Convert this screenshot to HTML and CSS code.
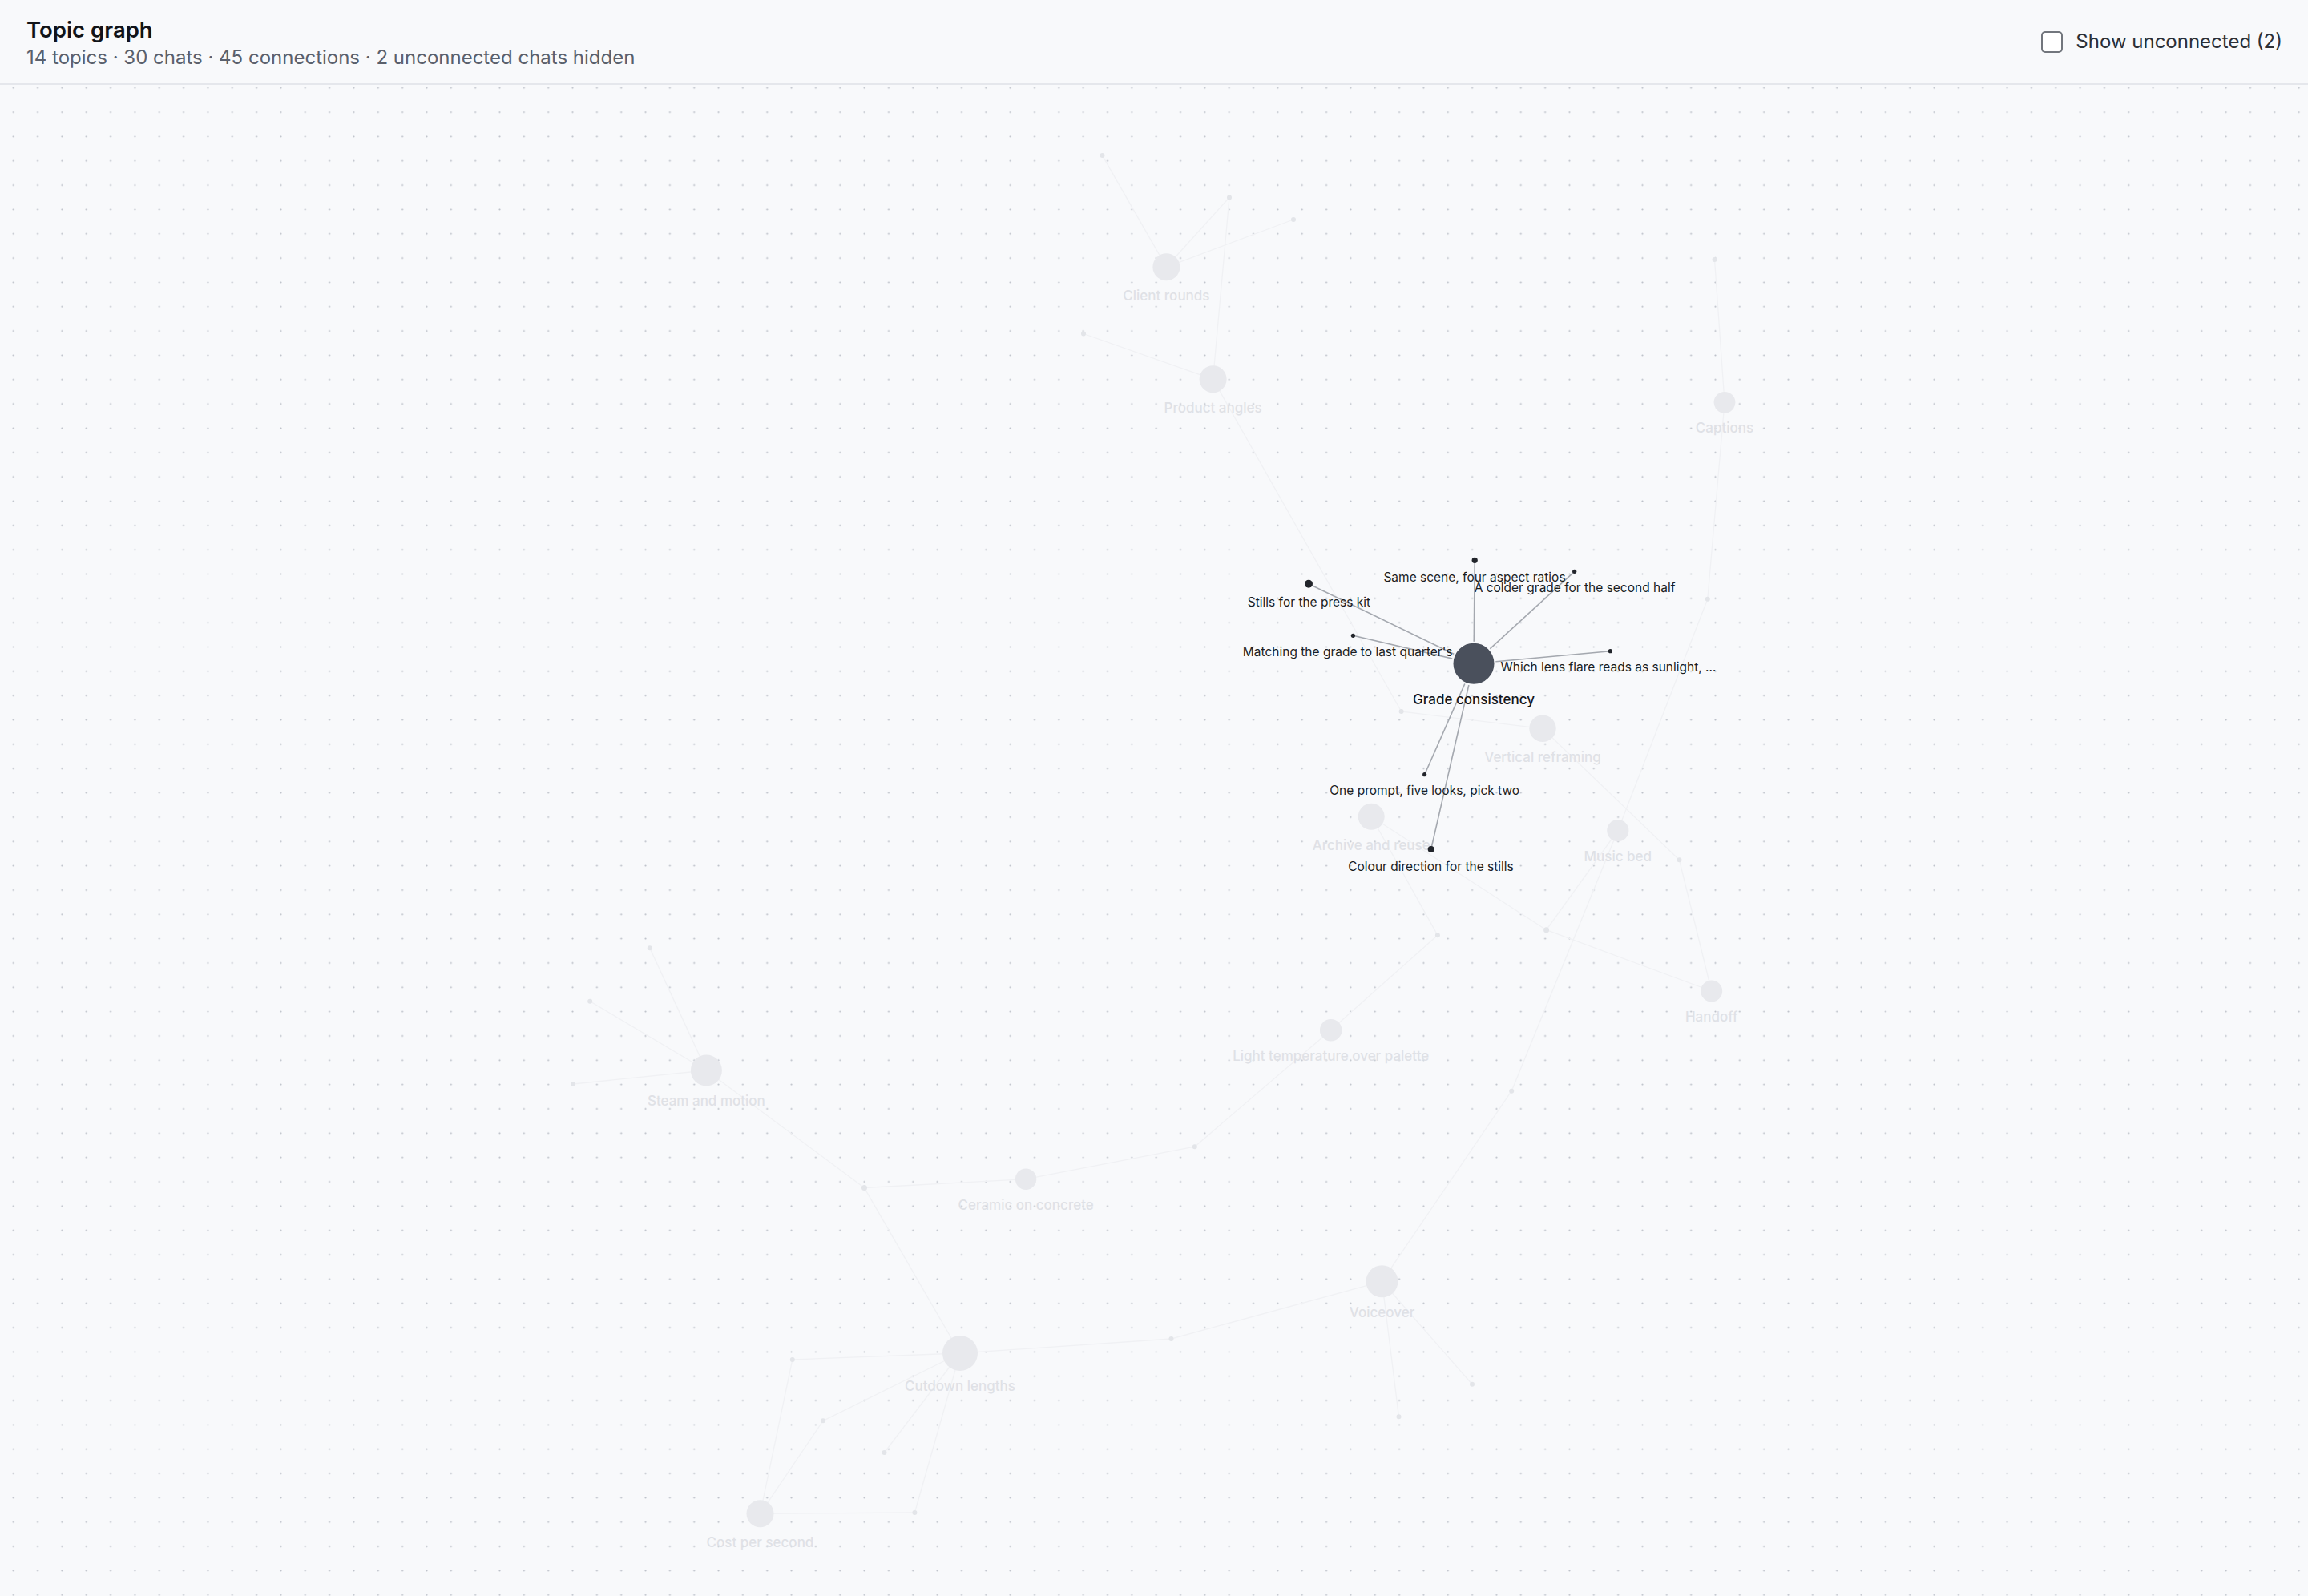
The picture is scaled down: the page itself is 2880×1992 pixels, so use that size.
FILE: index.html
```html
<!DOCTYPE html>
<html lang="en">
<head>
<meta charset="utf-8">
<title>Topic graph</title>
<link rel="stylesheet" href="styles.css">
</head>
<body>
<div class="app">
  <header class="topbar">
    <div class="titles">
      <h1 class="title">Topic graph</h1>
      <p class="meta">14 topics · 30 chats · 45 connections · 2 unconnected chats hidden</p>
    </div>
    <label class="toggle"><input type="checkbox" class="toggle-box"><span>Show unconnected (2)</span></label>
  </header>
  <main class="canvas">
    <svg class="graph" viewBox="0 106 2880 1886" preserveAspectRatio="xMinYMin meet" xmlns="http://www.w3.org/2000/svg">
      <defs>
        <pattern id="grid" x="1.53" y="94.53" width="30.34" height="30.34" patternUnits="userSpaceOnUse">
          <circle cx="15.17" cy="15.17" r="1.1" class="grid-dot"/>
        </pattern>
      </defs>
      <rect x="0" y="106" width="2880" height="1886" fill="url(#grid)"/>

      <g class="edges-dim">
        <line x1="1455.4" y1="333.3" x2="1375.5" y2="194"/>
        <line x1="1455.4" y1="333.3" x2="1534" y2="246.5"/>
        <line x1="1455.4" y1="333.3" x2="1614" y2="274"/>
        <line x1="1534" y1="246.5" x2="1513.6" y2="473.3"/>
        <line x1="1352" y1="416.5" x2="1513.6" y2="473.3"/>
        <line x1="1513.6" y1="473.3" x2="1748.6" y2="888"/>
        <line x1="2139.5" y1="324" x2="2152" y2="502.3"/>
        <line x1="2152" y1="502.3" x2="2130.8" y2="747.7"/>
        <line x1="2130.8" y1="747.7" x2="2018.8" y2="1036.7"/>
        <line x1="1748.6" y1="888" x2="1925" y2="909.3"/>
        <line x1="1925" y1="909.3" x2="2095.5" y2="1073.3"/>
        <line x1="2095.5" y1="1073.3" x2="2135.7" y2="1237"/>
        <line x1="2018.8" y1="1036.7" x2="1929.6" y2="1160.7"/>
        <line x1="1929.6" y1="1160.7" x2="2135.7" y2="1237"/>
        <line x1="2018.8" y1="1036.7" x2="1886.2" y2="1361.7"/>
        <line x1="1929.6" y1="1160.7" x2="1711.2" y2="1019.3"/>
        <line x1="1793.9" y1="1167.3" x2="1711.2" y2="1019.3"/>
        <line x1="1660.7" y1="1285.7" x2="1793.9" y2="1167.3"/>
        <line x1="1660.7" y1="1285.7" x2="1490.8" y2="1431.2"/>
        <line x1="1490.8" y1="1431.2" x2="1280.1" y2="1471.7"/>
        <line x1="1280.1" y1="1471.7" x2="1078.5" y2="1482.5"/>
        <line x1="1078.5" y1="1482.5" x2="881.4" y2="1336"/>
        <line x1="881.4" y1="1336" x2="715" y2="1353"/>
        <line x1="881.4" y1="1336" x2="736.2" y2="1249.8"/>
        <line x1="881.4" y1="1336" x2="810.8" y2="1183.2"/>
        <line x1="1078.5" y1="1482.5" x2="1198" y2="1689"/>
        <line x1="1198" y1="1689" x2="1461.5" y2="1671"/>
        <line x1="1461.5" y1="1671" x2="1724.5" y2="1599.3"/>
        <line x1="1198" y1="1689" x2="988.8" y2="1697"/>
        <line x1="988.8" y1="1697" x2="948.5" y2="1889.3"/>
        <line x1="1198" y1="1689" x2="1103.5" y2="1813"/>
        <line x1="1027" y1="1773.3" x2="948.5" y2="1889.3"/>
        <line x1="1198" y1="1689" x2="1027" y2="1773.3"/>
        <line x1="1198" y1="1689" x2="1141.4" y2="1888"/>
        <line x1="1141.4" y1="1888" x2="948.5" y2="1889.3"/>
        <line x1="1724.5" y1="1599.3" x2="1837" y2="1727.7"/>
        <line x1="1724.5" y1="1599.3" x2="1745.5" y2="1768.2"/>
        <line x1="1724.5" y1="1599.3" x2="1886.2" y2="1361.7"/>
      </g>

      <g class="topics-dim">
        <circle cx="1455.4" cy="333.3" r="17"/>
        <circle cx="1513.6" cy="473.3" r="17"/>
        <circle cx="2152" cy="502.3" r="13.4"/>
        <circle cx="1925" cy="909.3" r="16.7"/>
        <circle cx="1711.2" cy="1019.3" r="16.5"/>
        <circle cx="2018.8" cy="1036.7" r="13.6"/>
        <circle cx="2135.7" cy="1237" r="13.5"/>
        <circle cx="1660.7" cy="1285.7" r="13.8"/>
        <circle cx="881.4" cy="1336" r="19.5"/>
        <circle cx="1280.1" cy="1471.7" r="13.2"/>
        <circle cx="1724.5" cy="1599.3" r="20"/>
        <circle cx="1198" cy="1689" r="22"/>
        <circle cx="948.5" cy="1889.3" r="17"/>
      </g>

      <g class="chats-dim">
        <circle cx="1375.5" cy="194" r="3"/>
        <circle cx="1534" cy="246.5" r="3"/>
        <circle cx="1614" cy="274" r="3"/>
        <circle cx="1352" cy="416.5" r="3"/>
        <circle cx="2139.5" cy="324" r="3"/>
        <circle cx="2130.8" cy="747.7" r="3"/>
        <circle cx="1748.6" cy="888" r="3"/>
        <circle cx="2095.5" cy="1073.3" r="3"/>
        <circle cx="1929.6" cy="1160.7" r="3.5"/>
        <circle cx="1793.9" cy="1167.3" r="3"/>
        <circle cx="1886.2" cy="1361.7" r="3"/>
        <circle cx="810.8" cy="1183.2" r="3"/>
        <circle cx="736.2" cy="1249.8" r="3"/>
        <circle cx="715" cy="1353" r="3"/>
        <circle cx="1078.5" cy="1482.5" r="3.5"/>
        <circle cx="1490.8" cy="1431.2" r="3"/>
        <circle cx="1461.5" cy="1671" r="3"/>
        <circle cx="988.8" cy="1697" r="3"/>
        <circle cx="1027" cy="1773.3" r="3"/>
        <circle cx="1103.5" cy="1813" r="3"/>
        <circle cx="1141.4" cy="1888" r="3"/>
        <circle cx="1837" cy="1727.7" r="3"/>
        <circle cx="1745.5" cy="1768.2" r="3"/>
      </g>

      <g class="labels-dim">
        <text x="1455.4" y="375">Client rounds</text>
        <text x="1513.6" y="515">Product angles</text>
        <text x="2152" y="540">Captions</text>
        <text x="1925" y="951">Vertical reframing</text>
        <text x="1711.2" y="1061">Archive and reuse</text>
        <text x="2018.8" y="1075">Music bed</text>
        <text x="2135.7" y="1275">Handoff</text>
        <text x="1660.7" y="1324">Light temperature over palette</text>
        <text x="881.4" y="1380">Steam and motion</text>
        <text x="1280.1" y="1510">Ceramic on concrete</text>
        <text x="1724.5" y="1644">Voiceover</text>
        <text x="1198" y="1736">Cutdown lengths</text>
        <text x="948.5" y="1931">Cost per second</text>
      </g>

      <g class="edges-active">
        <line x1="1839" y1="828.3" x2="1840.2" y2="699.3"/>
        <line x1="1839" y1="828.3" x2="1964.7" y2="713.3"/>
        <line x1="1839" y1="828.3" x2="1633" y2="728.7"/>
        <line x1="1839" y1="828.3" x2="1688.4" y2="793.3"/>
        <line x1="1839" y1="828.3" x2="2009.4" y2="812.7"/>
        <line x1="1839" y1="828.3" x2="1777.7" y2="966.7"/>
        <line x1="1839" y1="828.3" x2="1785.7" y2="1060"/>
      </g>

      <g class="chats-active">
        <circle cx="1840.2" cy="699.3" r="3.6"/>
        <circle cx="1964.7" cy="713.3" r="2.6"/>
        <circle cx="1633" cy="728.7" r="5"/>
        <circle cx="1688.4" cy="793.3" r="2.6"/>
        <circle cx="2009.4" cy="812.7" r="2.6"/>
        <circle cx="1777.7" cy="966.7" r="2.6"/>
        <circle cx="1785.7" cy="1060" r="4"/>
      </g>

      <g class="labels-chat">
        <text x="1840" y="726">Same scene, four aspect ratios</text>
        <text x="1965" y="739">A colder grade for the second half</text>
        <text x="1633.5" y="757">Stills for the press kit</text>
        <text x="1688.4" y="819">Matching the grade to last quarter's…</text>
        <text x="2007" y="838">Which lens flare reads as sunlight, …</text>
        <text x="1777.7" y="992">One prompt, five looks, pick two</text>
        <text x="1785.5" y="1087">Colour direction for the stills</text>
      </g>

      <circle class="topic-active" cx="1839" cy="828.3" r="26.5"/>
      <text class="label-topic" x="1839" y="879">Grade consistency</text>
    </svg>
  </main>
</div>
</body>
</html>
```

FILE: styles.css
```css
html, body {
  margin: 0;
  height: 100%;
}

body {
  background: #f8f9fb;
  font-family: Inter, "Noto Sans", "Liberation Sans", sans-serif;
  color: #15171c;
}

.app {
  display: flex;
  flex-direction: column;
  height: 100vh;
}

.topbar {
  box-sizing: border-box;
  height: 106px;
  flex: none;
  border-bottom: 2px solid #e5e7ec;
  padding: 0 32px 0 33px;
  display: flex;
  justify-content: space-between;
  align-items: center;
  background: #f8f9fb;
}

.titles {
  margin-top: 3px;
  display: flex;
  flex-direction: column;
  gap: 4px;
}

.title {
  margin: 0;
  font-size: 27.5px;
  line-height: 32px;
  font-weight: 600;
  color: #111318;
}

.meta {
  margin: 0;
  font-size: 24px;
  line-height: 30px;
  font-weight: 400;
  color: #5a606c;
}

.toggle {
  display: flex;
  align-items: center;
  gap: 16px;
  font-size: 24px;
  line-height: 30px;
  color: #2b2f36;
}

.toggle-box {
  appearance: none;
  -webkit-appearance: none;
  margin: 0;
  width: 27px;
  height: 27px;
  box-sizing: border-box;
  border: 2px solid #72767d;
  border-radius: 5px;
  background: #ffffff;
}

.canvas {
  flex: 1;
  position: relative;
  overflow: hidden;
  background: #f8f9fb;
}

.graph {
  display: block;
  width: 100%;
  height: 100%;
}

.grid-dot {
  fill: #bcc0c8;
}

.edges-dim line {
  stroke: #f0f1f4;
  stroke-width: 1.3;
}

.topics-dim circle {
  fill: #e8e9ed;
}

.chats-dim circle {
  fill: #e3e5e9;
}

.labels-dim text {
  font-size: 17px;
  font-weight: 500;
  fill: #dfe1e6;
  text-anchor: middle;
}

.edges-active line {
  stroke: #a4a8af;
  stroke-width: 1.6;
}

.chats-active circle {
  fill: #22252b;
}

.labels-chat text {
  font-size: 15.5px;
  font-weight: 400;
  fill: #1a1d23;
  text-anchor: middle;
}

.topic-active {
  fill: #4a505c;
  stroke: #f8f9fb;
  stroke-width: 2;
}

.label-topic {
  font-size: 17px;
  font-weight: 500;
  fill: #14161b;
  text-anchor: middle;
}
```
